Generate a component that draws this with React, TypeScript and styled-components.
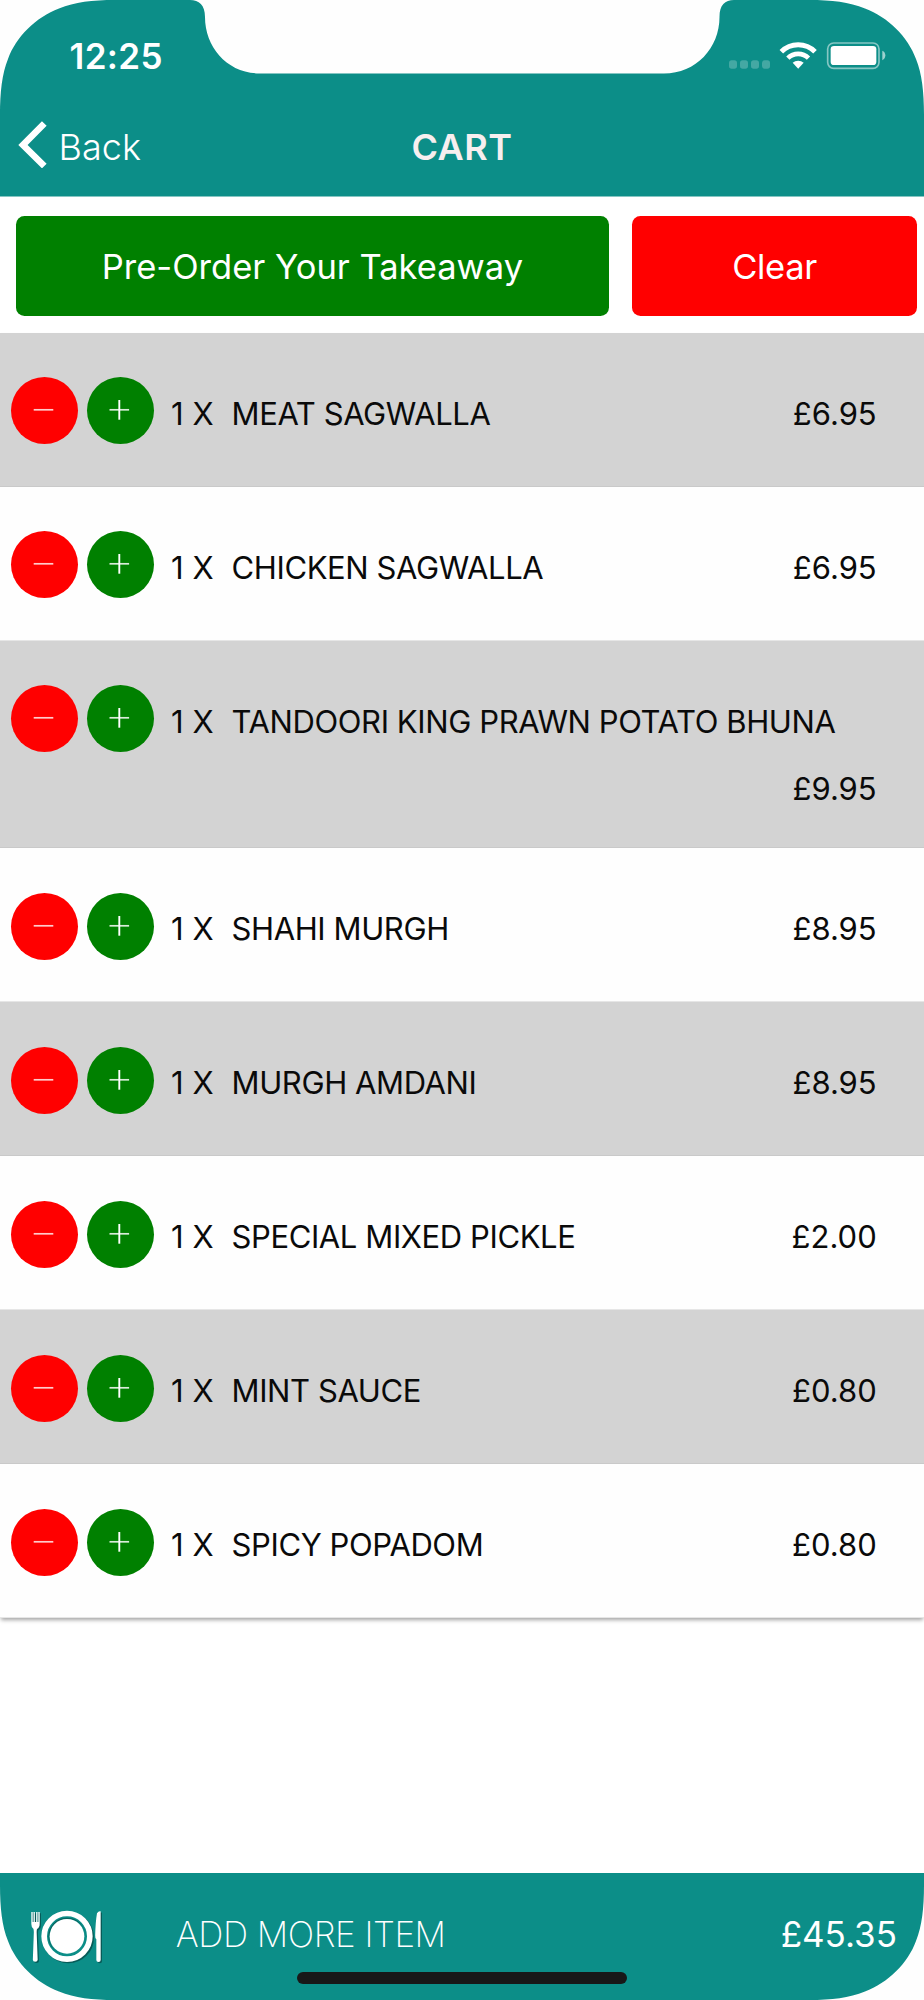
import React from "react";
import styled, { createGlobalStyle } from "styled-components";

const TEAL = "#0c8e88";

const GlobalStyle = createGlobalStyle`
  *, *::before, *::after { box-sizing: border-box; }
  body {
    margin: 0;
    background: #fff;
    font-family: Inter, "Liberation Sans", sans-serif;
  }
  button {
    font: inherit;
    border: 0;
    padding: 0;
    cursor: pointer;
  }
`;

const Screen = styled.div`
  width: 924px;
  height: 2000px;
  display: flex;
  flex-direction: column;
  background: #fefefe;
  overflow: hidden;
`;

const Header = styled.header`
  flex: none;
  height: 197px;
  background: ${TEAL};
  color: #fff;
  clip-path: path("M0 115 C0 92 2 74 8 59 C16 37 36 17 59 8.5 C75 2 92 0 115 0 H190 C199 0 205 5 205 17 C205 48 228 73.5 260 73.5 H664 C696 73.5 719.5 48 719.5 17 C719.5 5 725 0 734 0 H809 C832 0 849 2 865 8.5 C888 17 908 37 916 59 C922 74 924 92 924 115 V196.6 H0 Z");
`;

const StatusBar = styled.div`
  height: 98px;
  display: flex;
  justify-content: space-between;
  padding: 40px 38px 0 69.5px;
`;

const Time = styled.span`
  font-size: 35px;
  line-height: 32px;
  font-weight: 600;
  letter-spacing: 0.35px;
`;

const StatusIcons = styled.div`
  display: flex;
  height: 32px;
`;

const NavBar = styled.nav`
  height: 99px;
  display: grid;
  grid-template-columns: 1fr auto 1fr;
  align-items: start;
  padding: 22px 18px 0;
`;

const BackButton = styled.button`
  display: flex;
  align-items: flex-start;
  gap: 11.5px;
  width: max-content;
  background: none;
  color: #fff;
  font-size: 36px;
  font-weight: 300;
  line-height: 54px;
  letter-spacing: 0.1px;
`;

const Title = styled.h1`
  margin: 2px 0 0;
  color: #f7efef;
  font-size: 36px;
  line-height: 50px;
  font-weight: 600;
  letter-spacing: 0.5px;
`;

const Actions = styled.div`
  flex: none;
  height: 136px;
  display: flex;
  align-items: flex-start;
  gap: 22.5px;
  padding: 18.7px 6.5px 0 15.7px;
  background: #fff;
`;

const ActionButton = styled.button<{ $color: string; $width: number; $spacing?: number }>`
  width: ${(p) => p.$width}px;
  height: 100.6px;
  border-radius: 8.5px;
  background: ${(p) => p.$color};
  color: #fff;
  font-size: 34.5px;
  font-weight: 400;
  line-height: 102px;
  letter-spacing: ${(p) => p.$spacing ?? 0}px;
`;

const List = styled.ul`
  position: relative;
  z-index: 1;
  flex: none;
  margin: 0;
  padding: 0;
  list-style: none;
  box-shadow: 0 3px 4px -1px rgba(0, 0, 0, 0.36);
`;

const Row = styled.li<{ $shaded: boolean; $tall: boolean }>`
  height: ${(p) => (p.$tall ? 207.2 : 154.04)}px;
  display: flex;
  flex-wrap: wrap;
  align-content: flex-start;
  padding: 44.4px 47.3px 0 11.3px;
  border-bottom: 1px solid ${(p) => (p.$shaded ? "#c9c9c9" : "#e6e6e6")};
  background: ${(p) => (p.$shaded ? "#d3d3d3" : "#fefefe")};
  color: #0a0a0a;
  font-size: 31px;
  line-height: 67px;
`;

const RoundButton = styled.button<{ $color: string }>`
  width: 67px;
  height: 67px;
  flex: none;
  display: flex;
  margin-right: 8.9px;
  border-radius: 50%;
  background: ${(p) => p.$color};
`;

const Quantity = styled.span`
  width: 60.5px;
  margin-left: 8px;
  padding-top: 2.6px;
  white-space: nowrap;
`;

const ItemName = styled.span`
  padding-top: 2.6px;
  letter-spacing: -0.4px;
  white-space: nowrap;
`;

const Price = styled.span<{ $below: boolean }>`
  margin-left: auto;
  padding-top: 2.6px;
  ${(p) => p.$below && "flex-basis: 100%; text-align: right; padding-top: 0; margin-top: 0.2px;"}
`;

const Spacer = styled.div`
  flex: 1;
  background: #fff;
`;

const Footer = styled.footer`
  position: relative;
  flex: none;
  height: 127.5px;
  display: flex;
  align-items: flex-start;
  padding: 37px 27px 0 31px;
  background: ${TEAL};
  color: #fff;
  font-size: 35px;
  line-height: 48px;
  clip-path: path("M0 0 H924 V12.5 C924 35.5 922 53.5 916 68.5 C908 90.5 888 110.5 865 119 C849 125.5 832 127.5 809 127.5 H115 C92 127.5 75 125.5 59 119 C36 110.5 16 90.5 8 68.5 C2 53.5 0 35.5 0 12.5 Z");
`;

const AddMore = styled.span`
  margin-left: 71.8px;
  font-weight: 200;
  letter-spacing: -0.48px;
`;

const Total = styled.span`
  margin-left: auto;
  font-weight: 400;
`;

const HomeIndicator = styled.div`
  position: absolute;
  left: 297px;
  bottom: 16px;
  width: 330px;
  height: 12px;
  border-radius: 6px;
  background: #181818;
`;

const WifiGap = styled.span`
  width: 7px;
`;

const BatteryGap = styled.span`
  width: 8.4px;
`;

const SignalIcon = () => (
  <svg width="43" height="30" viewBox="324 120 129 90" fill="#fff" fillOpacity="0.23">
    {[327, 360, 393, 426].map((x) => (
      <rect key={x} x={x} y="181" width="24" height="25" rx="8" />
    ))}
  </svg>
);

const WifiIcon = () => (
  <svg width="40" height="30" viewBox="475 120 120 90">
    <g fill="none" stroke="#fff">
      <path d="M485 155 A71 71 0 0 1 586 155" strokeWidth="15" />
      <path d="M504.5 174.5 A44 44 0 0 1 566.5 174.5" strokeWidth="14" />
    </g>
    <path d="M535.5 206 L519 188.5 A24 24 0 0 1 552 188.5 Z" fill="#fff" />
  </svg>
);

const BatteryIcon = () => (
  <svg width="60" height="30" viewBox="620 120 180 90">
    <rect x="625" y="129" width="154" height="76" rx="18" fill="none" stroke="#fff" strokeOpacity="0.5" strokeWidth="5" />
    <rect x="634" y="138" width="137" height="57" rx="10" fill="#fff" />
    <path d="M789 152 Q798 156 798 166 Q798 176 789 181 Z" fill="#fff" fillOpacity="0.6" />
  </svg>
);

const ChevronIcon = () => (
  <svg width="29" height="48" viewBox="0 0 29 48" fill="none" stroke="#fff" strokeWidth="6.6">
    <path d="M26.3 3.5 L5 25 L26.3 46" />
  </svg>
);

const MinusIcon = () => (
  <svg width="67" height="67" viewBox="0 0 67 67">
    <path d="M22.7 32.8 H42.3" stroke="#fff" strokeOpacity="0.8" strokeWidth="1.7" />
  </svg>
);

const PlusIcon = () => (
  <svg width="67" height="67" viewBox="0 0 67 67">
    <path d="M22.5 32.8 H42.1" stroke="#fff" strokeOpacity="0.85" strokeWidth="1.7" />
    <path d="M32.3 23 V42.7" stroke="#fff" strokeWidth="1.9" />
  </svg>
);

const PlateShape = () => (
  <>
    <circle cx="201" cy="257" r="68.5" fill="none" strokeWidth="17" />
    <circle cx="201" cy="257" r="52" stroke="none" />
    <path
      stroke="none"
      d="M94 184 h4 v30 h2.5 v-30 h4 v30 h4 v-30 h4 v30 h2.5 v-30 h4 v36 q0 11 -8 15 q-1 4 -1 10 l3 82 q0 6 -7.5 6 q-7 0 -7 -6 l3 -82 q0 -6 -1 -10 q-6.5 -4 -6.5 -15 Z"
    />
    <path stroke="none" d="M302 182 V328 q0 6 -6.5 6 q-6.5 0 -6.5 -6 V266 q-4 -2 -3.5 -12 q1 -40 5.5 -66 q5 -8 11 -6 Z" />
  </>
);

const PlateIcon = () => (
  <svg width="73" height="55" viewBox="93 178 219 165">
    <g transform="translate(4 4)" fill="#064b48" stroke="#064b48" opacity="0.75">
      <PlateShape />
    </g>
    <circle cx="201" cy="257" r="68" fill={TEAL} />
    <circle cx="201" cy="257" r="56" fill="#07645f" />
    <circle cx="203" cy="260" r="55" fill={TEAL} />
    <g fill="#fff" stroke="#fff">
      <PlateShape />
    </g>
  </svg>
);

interface CartItem {
  name: string;
  price: string;
  wraps?: boolean;
}

const items: CartItem[] = [
  { name: "MEAT SAGWALLA", price: "£6.95" },
  { name: "CHICKEN SAGWALLA", price: "£6.95" },
  { name: "TANDOORI KING PRAWN POTATO BHUNA", price: "£9.95", wraps: true },
  { name: "SHAHI MURGH", price: "£8.95" },
  { name: "MURGH AMDANI", price: "£8.95" },
  { name: "SPECIAL MIXED PICKLE", price: "£2.00" },
  { name: "MINT SAUCE", price: "£0.80" },
  { name: "SPICY POPADOM", price: "£0.80" },
];

export default function App() {
  return (
    <>
      <GlobalStyle />
      <Screen>
        <Header>
          <StatusBar>
            <Time>12:25</Time>
            <StatusIcons>
              <SignalIcon />
              <WifiGap />
              <WifiIcon />
              <BatteryGap />
              <BatteryIcon />
            </StatusIcons>
          </StatusBar>
          <NavBar>
            <BackButton>
              <ChevronIcon />
              Back
            </BackButton>
            <Title>CART</Title>
          </NavBar>
        </Header>
        <Actions>
          <ActionButton $color="#008000" $width={593.5}>Pre-Order Your Takeaway</ActionButton>
          <ActionButton $color="#ff0000" $width={285.8} $spacing={-0.3}>Clear</ActionButton>
        </Actions>
        <List>
          {items.map((item, i) => (
            <Row key={item.name} $shaded={i % 2 === 0} $tall={!!item.wraps}>
              <RoundButton $color="#ff0000" aria-label="Remove one"><MinusIcon /></RoundButton>
              <RoundButton $color="#008000" aria-label="Add one"><PlusIcon /></RoundButton>
              <Quantity>1 X</Quantity>
              <ItemName>{item.name}</ItemName>
              <Price $below={!!item.wraps}>{item.price}</Price>
            </Row>
          ))}
        </List>
        <Spacer />
        <Footer>
          <PlateIcon />
          <AddMore>ADD MORE ITEM</AddMore>
          <Total>£45.35</Total>
          <HomeIndicator />
        </Footer>
      </Screen>
    </>
  );
}
